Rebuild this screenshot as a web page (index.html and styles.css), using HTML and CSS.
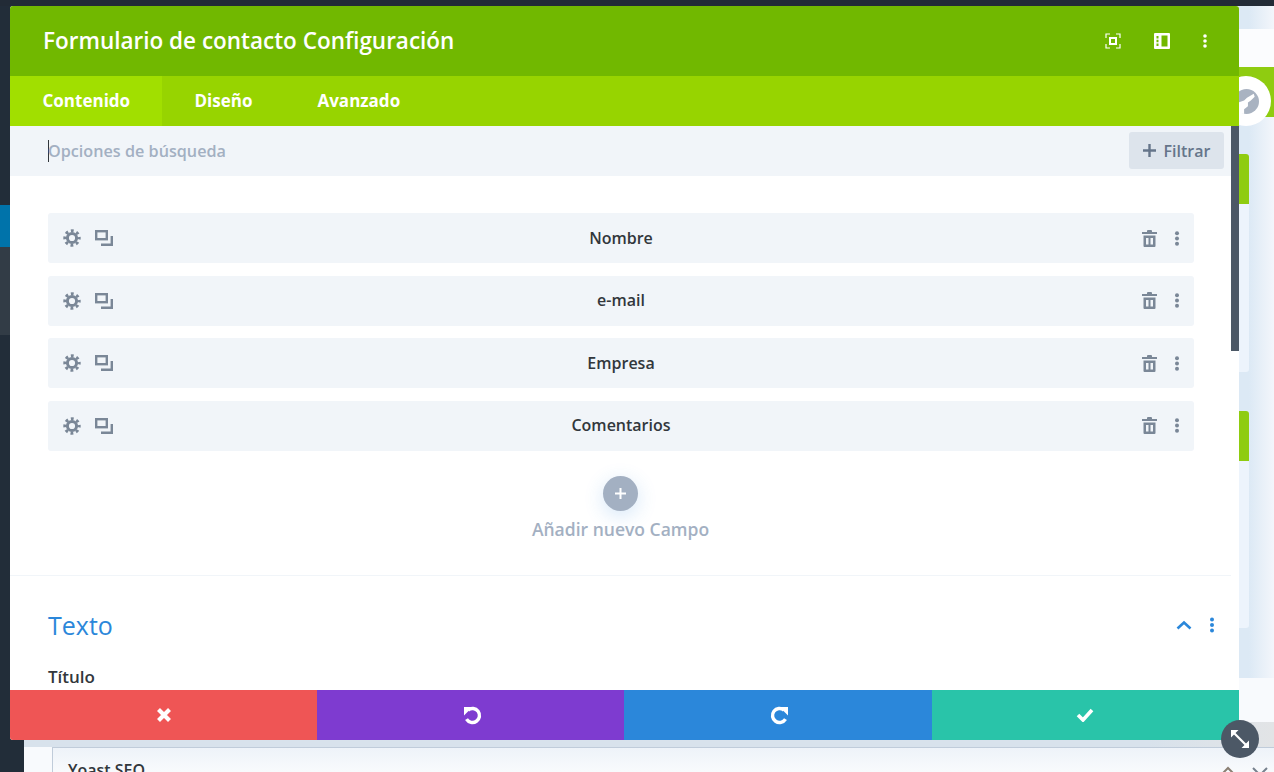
FILE: index.html
```html
<!DOCTYPE html>
<html lang="es">
<head>
    <meta charset="UTF-8">
    <meta name="viewport" content="width=device-width, initial-scale=1.0">
    <title>Formulario de contacto Configuración</title>
    <link rel="stylesheet" href="styles.css">
</head>
<body>

    <!-- iconos repetidos de las filas -->
    <svg class="icon-defs" width="0" height="0">
        <symbol id="icon-gear" viewBox="0 0 18 18">
            <circle cx="9" cy="9" r="4.6" fill="none" stroke="#7a8797" stroke-width="3"/>
            <circle cx="9" cy="9" r="7.2" fill="none" stroke="#7a8797" stroke-width="3" stroke-dasharray="2.83 2.83" stroke-dashoffset="1.41"/>
        </symbol>
        <symbol id="icon-copy" viewBox="0 0 18 16">
            <rect x="1.2" y="1.2" width="10.6" height="8" fill="none" stroke="#7a8797" stroke-width="2.4"/>
            <path d="M16.8 6v8.800H6" fill="none" stroke="#7a8797" stroke-width="2.4"/>
        </symbol>
        <symbol id="icon-trash" viewBox="0 0 15 17">
            <path fill="#7a8797" fill-rule="evenodd" d="M5 2V1Q5 0 6 0h3q1 0 1 1v1h5v2H0V2zM1.5 5.500h12V16a1 1 0 0 1-1 1h-10a1 1 0 0 1-1-1zM4 8v6.500h2.500V8zm4.500 0v6.500H11V8z"/>
        </symbol>
        <symbol id="icon-dots" viewBox="0 0 6 15">
            <circle cx="3" cy="2.3" r="2" fill="#7a8797"/>
            <circle cx="3" cy="7.5" r="2" fill="#7a8797"/>
            <circle cx="3" cy="12.7" r="2" fill="#7a8797"/>
        </symbol>
    </svg>

    <!-- pagina de fondo, casi toda tapada por el modal -->
    <div class="page">
        <div class="admin-bar"></div>
        <div class="layout">
            <div class="sidebar">
                <div class="side-a"></div>
                <div class="side-active"></div>
                <div class="side-b"></div>
            </div>
            <div class="main">
                <div class="top-strip"></div>
                <div class="green-bar"></div>
                <div class="panel">
                    <div class="panel-head"></div>
                </div>
                <div class="panel panel-second">
                    <div class="panel-head"></div>
                </div>
                <div class="white-strip"></div>
                <div class="grey-strip"></div>
                <div class="yoast-row">
                    <div class="yoast-box">
                        <span>Yoast SEO</span>
                        <div class="yoast-icons">
                            <svg width="16" height="10" viewBox="0 0 16 10" fill="none" stroke="#8a7f73" stroke-width="2"><path d="M1.5 8.5L8 2l6.500 6.500"/></svg>
                            <svg width="18" height="18" viewBox="0 0 18 18" fill="none" stroke="#77818d" stroke-width="2"><path d="M2 2l14 14M16 2L2 16"/></svg>
                        </div>
                    </div>
                </div>
            </div>
        </div>
    </div>

    <div class="globe-badge">
        <svg width="25" height="25" viewBox="0 0 26 26">
            <circle cx="13" cy="13" r="13" fill="#a9b3c1"/>
            <path d="M0 14h4.500l6-2 3-3 7-4 1 3-4 4-3 2v4l-4 3v5L0 24z" fill="#fff"/>
        </svg>
    </div>

    <div class="modal">
        <div class="modal-header">
            <div class="modal-title">Formulario de contacto Configuración</div>
            <div class="header-icons">
                <svg width="16" height="16" viewBox="0 0 16 16" fill="none" stroke="#fff" stroke-width="1.2">
                    <path d="M1 5V1h4M11 1h4v4M15 11v4h-4M5 15H1v-4"/>
                    <rect x="5" y="5" width="6" height="6" stroke-width="2"/>
                </svg>
                <svg width="16" height="16" viewBox="0 0 16 16">
                    <path fill="#fff" fill-rule="evenodd" d="M1 0h14a1 1 0 0 1 1 1v14a1 1 0 0 1-1 1H1a1 1 0 0 1-1-1V1a1 1 0 0 1 1-1zm1.5 3v2.500h2V3zm0 3.800v2.500h2V6.800zm0 3.700V13h2v-2.500zM7.500 2.500v11h6v-11z"/>
                </svg>
                <svg width="4" height="16" viewBox="0 0 4 16" fill="#fff">
                    <circle cx="2" cy="3" r="1.8"/><circle cx="2" cy="8" r="1.8"/><circle cx="2" cy="13" r="1.8"/>
                </svg>
            </div>
        </div>

        <div class="tabs">
            <div class="tab tab-active">Contenido</div>
            <div class="tab">Diseño</div>
            <div class="tab">Avanzado</div>
        </div>

        <div class="modal-scroll">
            <div class="search-bar">
                <div class="search-text"><span class="caret"></span>Opciones de búsqueda</div>
                <div class="filter-btn">
                    <svg width="13" height="13" viewBox="0 0 13 13"><path d="M6.5 0v13M0 6.500h13" stroke="#65758a" stroke-width="2.4"/></svg>
                    Filtrar
                </div>
            </div>

            <div class="fields">
                <div class="field-row">
                    <div class="row-icons">
                        <svg width="18" height="18"><use href="#icon-gear"/></svg>
                        <svg width="18" height="16"><use href="#icon-copy"/></svg>
                    </div>
                    <div class="field-name">Nombre</div>
                    <div class="row-actions">
                        <svg width="15" height="17"><use href="#icon-trash"/></svg>
                        <svg width="6" height="15"><use href="#icon-dots"/></svg>
                    </div>
                </div>
                <div class="field-row">
                    <div class="row-icons">
                        <svg width="18" height="18"><use href="#icon-gear"/></svg>
                        <svg width="18" height="16"><use href="#icon-copy"/></svg>
                    </div>
                    <div class="field-name">e-mail</div>
                    <div class="row-actions">
                        <svg width="15" height="17"><use href="#icon-trash"/></svg>
                        <svg width="6" height="15"><use href="#icon-dots"/></svg>
                    </div>
                </div>
                <div class="field-row">
                    <div class="row-icons">
                        <svg width="18" height="18"><use href="#icon-gear"/></svg>
                        <svg width="18" height="16"><use href="#icon-copy"/></svg>
                    </div>
                    <div class="field-name">Empresa</div>
                    <div class="row-actions">
                        <svg width="15" height="17"><use href="#icon-trash"/></svg>
                        <svg width="6" height="15"><use href="#icon-dots"/></svg>
                    </div>
                </div>
                <div class="field-row">
                    <div class="row-icons">
                        <svg width="18" height="18"><use href="#icon-gear"/></svg>
                        <svg width="18" height="16"><use href="#icon-copy"/></svg>
                    </div>
                    <div class="field-name">Comentarios</div>
                    <div class="row-actions">
                        <svg width="15" height="17"><use href="#icon-trash"/></svg>
                        <svg width="6" height="15"><use href="#icon-dots"/></svg>
                    </div>
                </div>
            </div>

            <div class="add-field">
                <div class="add-circle">
                    <svg width="13" height="13" viewBox="0 0 13 13"><path d="M6.5 1v11M1 6.500h11" stroke="#fff" stroke-width="2"/></svg>
                </div>
                <div class="add-label">Añadir nuevo Campo</div>
            </div>

            <div class="section">
                <div class="section-head">
                    <div class="section-title">Texto</div>
                    <div class="section-icons">
                        <svg width="16" height="10" viewBox="0 0 16 10" fill="none" stroke="#2b87da" stroke-width="2.6"><path d="M1.5 8.5L8 2.500l6.500 6"/></svg>
                        <svg width="6" height="16" viewBox="0 0 6 16" fill="#2b87da"><circle cx="3" cy="2.5" r="2"/><circle cx="3" cy="8" r="2"/><circle cx="3" cy="13.5" r="2"/></svg>
                    </div>
                </div>
                <div class="option-label">Título</div>
            </div>

            <div class="scrollbar"></div>
        </div>

        <div class="modal-footer">
            <div class="foot-btn btn-red">
                <svg width="16" height="16" viewBox="0 0 16 16"><path d="M2.5 2.500l11 11M13.500 2.500l-11 11" stroke="#fff" stroke-width="4.2" fill="none"/></svg>
            </div>
            <div class="foot-btn btn-purple">
                <svg width="21" height="21" viewBox="0 0 21 21" fill="none"><path d="M6 5.100A7 7 0 1 1 4.500 14.100" stroke="#fff" stroke-width="3.4"/><path d="M2 2h8.500L2 10.500z" fill="#fff"/></svg>
            </div>
            <div class="foot-btn btn-blue">
                <svg width="21" height="21" viewBox="0 0 21 21" fill="none"><path d="M15 5.100A7 7 0 1 0 16.500 14.100" stroke="#fff" stroke-width="3.4"/><path d="M19 2h-8.500L19 10.500z" fill="#fff"/></svg>
            </div>
            <div class="foot-btn btn-green">
                <svg width="18" height="14" viewBox="0 0 18 14" fill="none"><path d="M2 7l5 5 9-10" stroke="#fff" stroke-width="3.6"/></svg>
            </div>
        </div>
    </div>

    <div class="resize-btn">
        <svg width="20" height="20" viewBox="0 0 20 20" fill="#fff">
            <path d="M4 4l12 12" stroke="#fff" stroke-width="2.2"/>
            <path d="M1 1h7.500L1 8.500zM19 19h-7.500l7.500-7.500z"/>
        </svg>
    </div>

</body>
</html>
```

FILE: styles.css
```css
* {
    box-sizing: border-box;
}
html, body {
    margin: 0;
    height: 772px;
    overflow: hidden;
}
body {
    font-family: "Open Sans", "Liberation Sans", sans-serif;
    color: #32373c;
}
.icon-defs {
    position: absolute;
}

/* fondo */
.page {
    height: 772px;
    display: flex;
    flex-direction: column;
}
.admin-bar {
    height: 6px;
    background-color: #222b36;
}
.layout {
    flex: 1;
    display: flex;
    min-height: 0;
}
.sidebar {
    width: 24px;
    display: flex;
    flex-direction: column;
    background-color: #222d39;
}
.side-a {
    height: 199px;
}
.side-active {
    height: 42px;
    background-color: #0073aa;
}
.side-b {
    height: 88px;
    background-color: #323c46;
}
.main {
    flex: 1;
    padding-top: 23px;
    background: linear-gradient(90deg, #dce9f5 98%, #f3f6fb 100%);
    overflow: hidden;
}
.top-strip {
    height: 59px;
    background-color: #fbfcfe;
}
.green-bar {
    height: 50px;
    margin-top: -21px;
    background-color: #8fcc10;
}
.panel {
    height: 218px;
    width: 1225px;
    margin-top: 37px;
    background-color: #edf4fc;
    border-radius: 3px;
    overflow: hidden;
}
.panel-second {
    margin-top: 39px;
    height: 217px;
}
.panel-head {
    height: 50px;
    background-color: #8fcc10;
}
.white-strip {
    height: 44px;
    margin-top: 50px;
    background-color: #f8fafd;
}
.grey-strip {
    height: 25px;
    background: linear-gradient(90deg, #d8e2ec 90%, #e2e4e6 100%);
}
.yoast-row {
    padding-left: 28px;
    background-color: #f8fafd;
}
.yoast-box {
    height: 40px;
    padding: 12px 5px 0 15px;
    display: flex;
    justify-content: space-between;
    border: 1px solid #c0ccda;
    border-bottom: none;
    border-right: none;
    background: linear-gradient(180deg, #eef3f9, #fff);
    font-size: 16px;
    line-height: 20px;
    font-weight: 600;
}
.yoast-icons {
    display: flex;
    align-items: flex-start;
    gap: 15px;
    padding-top: 6px;
}
.globe-badge {
    position: absolute;
    left: 1221px;
    top: 76px;
    width: 50px;
    height: 50px;
    padding-left: 1px;
    border-radius: 50%;
    background-color: #fff;
    display: flex;
    align-items: center;
    justify-content: center;
}

/* modal */
.modal {
    position: absolute;
    left: 10px;
    top: 6px;
    width: 1229px;
    height: 734px;
    display: flex;
    flex-direction: column;
    background-color: #fff;
    border-radius: 3px;
    overflow: hidden;
}
.modal-header {
    height: 70px;
    flex-shrink: 0;
    display: flex;
    align-items: center;
    justify-content: space-between;
    padding: 0 32px 0 33px;
    background-color: #71b800;
}
.modal-title {
    margin-top: -2px;
    font-size: 22.5px;
    font-weight: 600;
    color: #fff;
}
.header-icons {
    display: flex;
    align-items: center;
    gap: 33px;
}
.tabs {
    height: 50px;
    flex-shrink: 0;
    display: flex;
    background-color: #97d400;
}
.tab {
    padding: 0 32.5px;
    font-size: 17px;
    font-weight: 700;
    line-height: 49px;
    color: #fff;
}
.tab-active {
    width: 152px;
    background-color: #a1df00;
}
.modal-scroll {
    flex: 1;
    min-height: 0;
    position: relative;
    overflow: hidden;
}
.search-bar {
    height: 50px;
    width: 1221px;
    display: flex;
    align-items: center;
    justify-content: space-between;
    padding: 0 7px 0 38px;
    background-color: #f1f5f9;
}
.search-text {
    display: flex;
    align-items: center;
    font-size: 16.2px;
    font-weight: 600;
    color: #a3b0c2;
}
.caret {
    width: 1px;
    height: 22px;
    margin-right: -1px;
    background-color: #32373c;
}
.filter-btn {
    width: 95px;
    height: 37px;
    margin-top: -1px;
    display: flex;
    align-items: center;
    justify-content: center;
    gap: 8px;
    border-radius: 3px;
    background-color: #dde4ec;
    font-size: 16px;
    font-weight: 600;
    color: #65758a;
}
.fields {
    width: 1221px;
    padding: 37px 37px 0 38px;
    display: flex;
    flex-direction: column;
    gap: 12.5px;
}
.field-row {
    height: 50px;
    display: flex;
    align-items: center;
    justify-content: space-between;
    padding: 0 14px 0 15px;
    border-radius: 3px;
    background-color: #f1f5f9;
}
.row-icons {
    width: 52px;
    display: flex;
    align-items: center;
    gap: 14px;
}
.field-name {
    margin: -1px 1px 0 0;
    font-size: 16px;
    font-weight: 550;
}
.row-actions {
    width: 52px;
    display: flex;
    align-items: center;
    justify-content: flex-end;
    gap: 17px;
}
.add-field {
    width: 1221px;
    height: 125px;
    padding-top: 25px;
    display: flex;
    flex-direction: column;
    align-items: center;
    border-bottom: 1px solid #f1f5f9;
}
.add-circle {
    width: 35px;
    height: 35px;
    border-radius: 50%;
    display: flex;
    align-items: center;
    justify-content: center;
    background-color: #a3b0c2;
    box-shadow: 0 5px 20px rgba(43, 135, 218, 0.2);
}
.add-label {
    margin-top: 6px;
    font-size: 17.5px;
    font-weight: 600;
    color: #a3b0c2;
}
.section {
    width: 1221px;
    padding: 29px 16px 0 38px;
}
.section-head {
    height: 40px;
    display: flex;
    align-items: center;
    justify-content: space-between;
}
.section-title {
    font-size: 25px;
    color: #2b87da;
}
.section-icons {
    display: flex;
    align-items: center;
    gap: 17px;
    padding-top: 1px;
}
.option-label {
    margin-top: 20px;
    font-size: 17px;
    font-weight: 550;
}
.scrollbar {
    position: absolute;
    top: 0;
    right: 0;
    width: 8px;
    height: 225px;
    background-color: #4c5866;
}
.modal-footer {
    height: 50px;
    flex-shrink: 0;
    display: grid;
    grid-template-columns: 307px 307px 308px 307px;
}
.foot-btn {
    display: flex;
    align-items: center;
    justify-content: center;
}
.btn-red {
    background-color: #ef5555;
}
.btn-purple {
    padding-left: 3px;
    background-color: #7e3bd0;
}
.btn-blue {
    padding-left: 2px;
    background-color: #2b87da;
}
.btn-green {
    padding-right: 1px;
    background-color: #29c4a9;
}
.resize-btn {
    position: absolute;
    left: 1221px;
    top: 720px;
    width: 38px;
    height: 38px;
    border-radius: 50%;
    display: flex;
    align-items: center;
    justify-content: center;
    background-color: #4c5866;
}
```
